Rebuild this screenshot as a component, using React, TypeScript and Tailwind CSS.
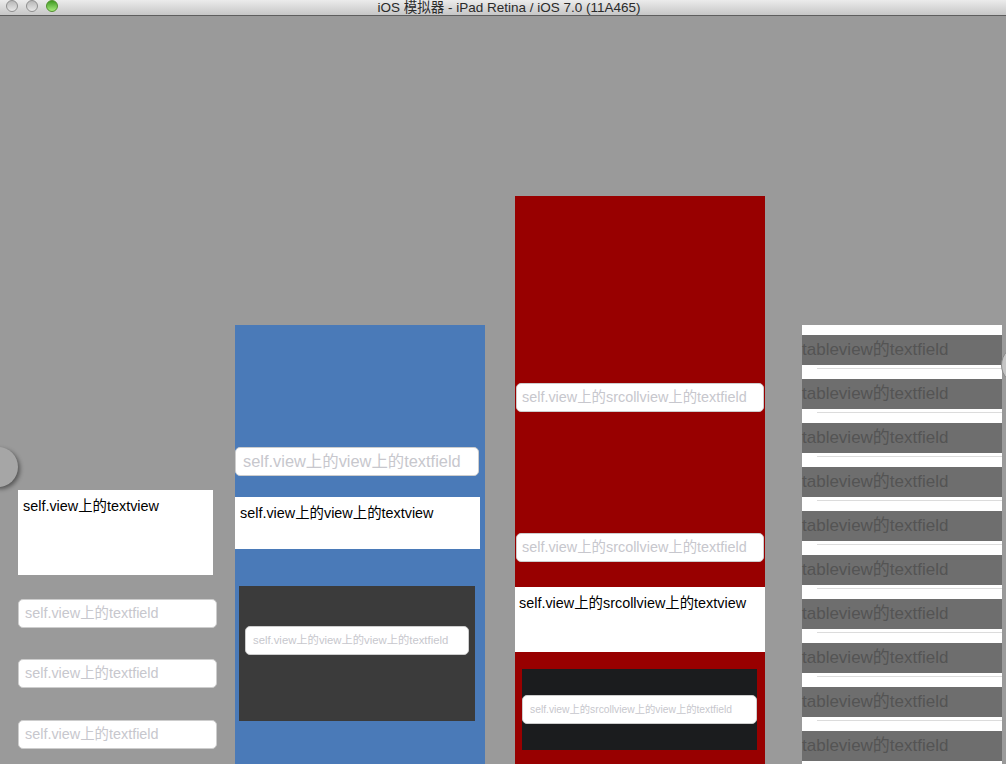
import React from "react";

const field =
  "flex h-[29px] items-center rounded-[5px] border border-[#cdcdcd] bg-white text-[#c7c7cd] whitespace-nowrap overflow-hidden";

function TextField({
  text,
  className = "",
  size = "text-[14.4px]",
  pad = "px-[7px]",
}: {
  text: string;
  className?: string;
  size?: string;
  pad?: string;
}) {
  return <div className={`${field} ${size} ${pad} ${className}`}>{text}</div>;
}

function TextView({ text, className = "" }: { text: string; className?: string }) {
  return <div className={`bg-white pt-[8px] text-[14.4px] leading-[17px] text-black ${className}`}>{text}</div>;
}

export default function App() {
  const rows = Array.from({ length: 10 }, (_, i) => i);

  return (
    <div className="relative h-[764px] w-[1006px] overflow-hidden bg-[#9a9a9a] font-['Liberation_Sans','Noto_Sans_CJK_SC',sans-serif]">
      {/* Title bar */}
      <div className="relative h-[16px] border-b border-[#5e5e5e] bg-gradient-to-b from-[#ececec] to-[#c6c6c6]">
        <div className="absolute left-[6px] top-0 flex gap-[8px]">
          <span className="h-[12px] w-[12px] rounded-full border border-[#8e8e8e] bg-gradient-to-b from-[#b8b8b8] to-[#e8e8e8]" />
          <span className="h-[12px] w-[12px] rounded-full border border-[#8e8e8e] bg-gradient-to-b from-[#b8b8b8] to-[#e8e8e8]" />
          <span className="h-[12px] w-[12px] rounded-full border border-[#4f8f2c] bg-gradient-to-b from-[#3e9a1e] to-[#a6ec7c]" />
        </div>
        <div className="pl-[12px] text-center text-[13.5px] leading-[15px] text-[#2a2a2a]">
          iOS 模拟器 - iPad Retina / iOS 7.0 (11A465)
        </div>
      </div>

      {/* Simulator screen */}
      <div className="flex h-[748px]">
        {/* self.view */}
        <div className="ml-[18px] flex w-[199px] flex-col pt-[474px]">
          <TextView text="self.view上的textview" className="h-[85px] w-[195px] pl-[5px]" />
          <TextField text="self.view上的textfield" className="mt-[24px]" pad="px-[6px]" />
          <TextField text="self.view上的textfield" className="mt-[31px]" pad="px-[6px]" />
          <TextField text="self.view上的textfield" className="mt-[32px]" pad="px-[6px]" />
        </div>

        {/* view */}
        <div className="ml-[18px] mt-[309px] flex w-[250px] flex-col bg-[#4a7ab8] pt-[122px]">
          <TextField text="self.view上的view上的textfield" size="text-[16.4px]" className="w-[244px]" />
          <TextView text="self.view上的view上的textview" className="mt-[21px] h-[52px] w-[245px] pl-[5px]" />
          <div className="ml-[4px] mt-[37px] h-[135px] w-[236px] bg-[#3b3b3b] pl-[6px] pt-[40px]">
            <TextField text="self.view上的view上的view上的textfield" size="text-[11.3px]" className="w-[224px]" />
          </div>
        </div>

        {/* scrollview */}
        <div className="ml-[30px] mt-[180px] flex w-[250px] flex-col bg-[#980000] pt-[187px]">
          <TextField text="self.view上的srcollview上的textfield" className="ml-[1px] w-[248px]" pad="px-[5px]" />
          <TextField text="self.view上的srcollview上的textfield" className="ml-[1px] mt-[121px] w-[248px]" pad="px-[5px]" />
          <TextView text="self.view上的srcollview上的textview" className="mt-[25px] h-[65px] pl-[4px]" />
          <div className="ml-[7px] mt-[17px] h-[81px] w-[235px] bg-[#1b1c1e] pt-[26px]">
            <TextField text="self.view上的srcollview上的view上的textfield" size="text-[10.3px]" />
          </div>
        </div>

        {/* tableview */}
        <div className="ml-[37px] mt-[309px] w-[200px] bg-white">
          {rows.map((i) => (
            <div key={i} className="flex h-[44px] flex-col pt-[10px]">
              <div className="flex h-[30px] items-center whitespace-nowrap bg-[#6e6e6e] text-[17px] text-[#545454]">
                tableview的textfield
              </div>
              <div className="h-[3px]" />
              <div className="ml-[15px] h-[1px] bg-[#dcdcdc]" />
            </div>
          ))}
        </div>
      </div>

      {/* assistive touch circles */}
      <div className="absolute left-[-22px] top-[447px] h-[40px] w-[40px] rounded-full bg-[#a6a6a6] shadow-[2px_2px_4px_rgba(0,0,0,0.45)]" />
      <div className="absolute left-[1001px] top-[345px] h-[40px] w-[40px] rounded-full border border-[#8a8a8a] bg-[#c4c4c4]" />
    </div>
  );
}
